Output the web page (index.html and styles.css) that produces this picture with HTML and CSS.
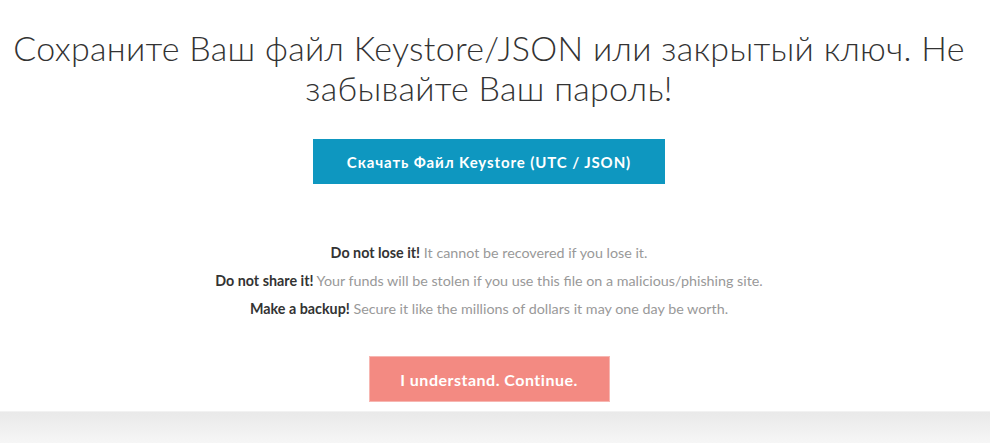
FILE: index.html
```html
<!DOCTYPE html>
<html lang="ru">
<head>
<meta charset="utf-8">
<link rel="stylesheet" href="styles.css">
</head>
<body>
<main class="panel">
  <h1 class="title">Сохраните Ваш файл Keystore/JSON или закрытый ключ. Не забывайте Ваш пароль!</h1>
  <button class="btn btn-download">Скачать Файл Keystore (UTC / JSON)</button>
  <div class="warnings">
    <p><strong>Do not lose it!</strong> It cannot be recovered if you lose it.</p>
    <p><strong>Do not share it!</strong> Your funds will be stolen if you use this file on a malicious/phishing site.</p>
    <p><strong>Make a backup!</strong> Secure it like the millions of dollars it may one day be worth.</p>
  </div>
  <button class="btn btn-continue">I understand. Continue.</button>
</main>
<footer class="band"></footer>
</body>
</html>
```
FILE: styles.css
```css
html, body {
  margin: 0;
  padding: 0;
  height: 100%;
  background: #fff;
  font-family: Lato, "Open Sans", sans-serif;
}
body {
  display: flex;
  flex-direction: column;
}
.panel {
  height: 411px;
  padding-right: 12px;
  display: flex;
  flex-direction: column;
  align-items: center;
  background: #fff;
}
.title {
  margin: 28px 0 0;
  width: 970px;
  font-weight: 300;
  font-size: 34px;
  line-height: 40px;
  color: #333;
  text-align: center;
  letter-spacing: 0.3px;
}
.btn {
  border: 1px solid transparent;
  color: #fff;
  font-family: Lato, sans-serif;
  cursor: pointer;
  padding: 0;
}
.btn-download {
  margin-top: 31px;
  width: 352px;
  height: 45px;
  background: #0e97c0;
  font-weight: 700;
  font-size: 15px;
  letter-spacing: 0.9px;
}
.warnings {
  margin-top: 55px;
  text-align: center;
  font-size: 14.3px;
  color: #999;
}
.warnings p {
  margin: 0;
  line-height: 28px;
}
.warnings strong {
  color: #333;
  font-weight: 700;
}
.btn-continue {
  margin-top: 33px;
  width: 241px;
  height: 46px;
  background: #f38a82;
  border-color: #f7b6b1;
  font-size: 16px;
  font-weight: 700;
  letter-spacing: 0.5px;
}
.band {
  flex: 1;
  border-top: 1px solid #f2f2f2;
  background: linear-gradient(#e9e9e9, #f6f6f6);
}
```
